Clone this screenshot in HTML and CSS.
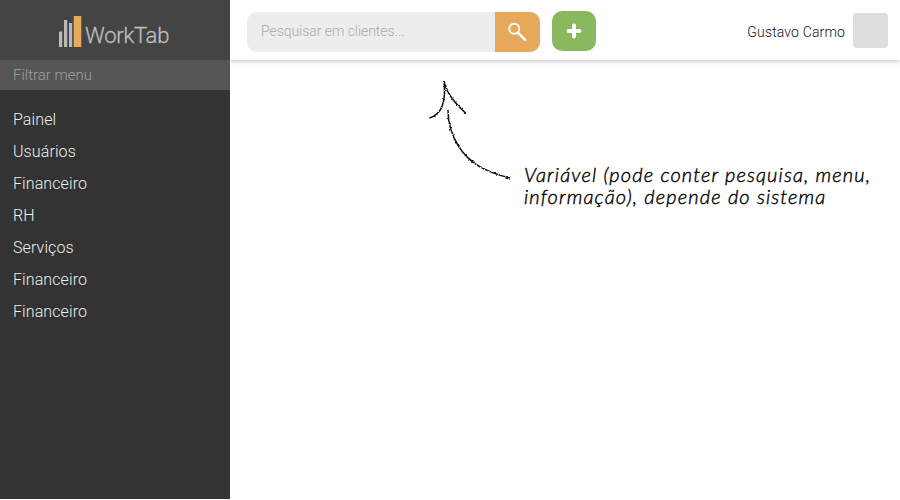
FILE: index.html
```html
<!DOCTYPE html>
<html lang="pt-BR">
<head>
<meta charset="utf-8">
<title>WorkTab</title>
<link rel="stylesheet" href="styles.css">
</head>
<body>
<div class="app">
  <aside class="sidebar">
    <div class="brand">
      <svg class="brand-mark" width="24" height="32" viewBox="0 0 24 32" aria-hidden="true">
        <path fill="#b9b9b9" d="M0 15.500h3.200V31H0zM5 4h3.200v27H5zM10 7h3.200v24H10z"/>
        <path fill="#e7a95c" d="M14.700 0h7.600v31h-7.600z"/>
      </svg>
      <span class="brand-name">WorkTab</span>
    </div>
    <div class="filter">Filtrar menu</div>
    <nav class="menu">
      <a>Painel</a>
      <a>Usuários</a>
      <a>Financeiro</a>
      <a>RH</a>
      <a>Serviços</a>
      <a>Financeiro</a>
      <a>Financeiro</a>
    </nav>
  </aside>
  <div class="main">
    <header class="topbar">
      <div class="search">
        <span class="search-text">Pesquisar em clientes...</span>
        <span class="search-button">
          <svg width="45" height="40" viewBox="0 0 45 40" fill="none" stroke="#fff" stroke-linecap="round" aria-hidden="true">
            <circle cx="19.2" cy="16.7" r="5" stroke-width="1.9"/>
            <path d="M23.2 20.8l7 7" stroke-width="2.5"/>
          </svg>
        </span>
      </div>
      <span class="add">
        <svg width="44" height="40" viewBox="0 0 44 40" stroke="#fff" stroke-width="4" stroke-linecap="round" aria-hidden="true">
          <path d="M22 14.6v10.8M16.6 20h10.8"/>
        </svg>
      </span>
      <span class="user">Gustavo Carmo</span>
      <span class="avatar"></span>
    </header>
    <section class="content">
      <svg class="arrow" width="100" height="110" viewBox="420 75 100 110" fill="none" stroke="#111" stroke-width="1.5" aria-hidden="true">
        <filter id="rough" x="-10%" y="-10%" width="120%" height="120%">
          <feTurbulence type="fractalNoise" baseFrequency=".55" numOctaves="2" seed="4"/>
          <feDisplacementMap in="SourceGraphic" scale="2.6" xChannelSelector="R" yChannelSelector="G"/>
        </filter>
        <g filter="url(#rough)">
          <path d="M510 178C486 172 470 164 459 147C452 136 448 123 448 110"/>
          <path d="M444 81C446 99 443 114 429.5 118"/>
          <path d="M444 81C447 95 457 105 466 113.500"/>
        </g>
      </svg>
      <p class="note"><span class="note-first">Variável (pode conter pesquisa, menu,</span><br><span class="note-second">informação), depende do sistema</span></p>
    </section>
  </div>
</div>
</body>
</html>
```
FILE: styles.css
```css
* { box-sizing: border-box; }
body {
  margin: 0;
  background: #fff;
  font-family: Roboto, "Liberation Sans", sans-serif;
  font-weight: 300;
}
.app { display: flex; height: 499px; }
.sidebar { width: 230px; flex: none; background: #333; }
.brand {
  height: 60px;
  padding: 16px 0 0 59px;
  display: flex;
  background: #444;
}
.brand-name {
  margin: 6px 0 0 2px;
  font-size: 22px;
  line-height: 28px;
  font-weight: 300;
  letter-spacing: -.25px;
  color: #bebebe;
  -webkit-text-stroke: .3px #bebebe;
}
.filter {
  height: 30px;
  padding-left: 13px;
  line-height: 30px;
  font-size: 15px;
  color: #a0a0a0;
  background: #555;
}
.menu { padding: 14px 13px 0; }
.menu a {
  display: block;
  height: 32px;
  line-height: 32px;
  font-size: 16px;
  letter-spacing: .1px;
  color: #eee;
}
.main { flex: 1; }
.topbar {
  height: 60px;
  padding: 0 12px 0 17px;
  display: flex;
  align-items: flex-start;
  box-shadow: 0 2px 4px rgba(0, 0, 0, .18);
  clip-path: inset(0 0 -10px 0);
}
.search {
  display: flex;
  width: 293px;
  height: 40px;
  margin-top: 12px;
  border-radius: 10px;
  overflow: hidden;
  background: #ededed;
}
.search-text {
  flex: 1;
  padding-left: 14px;
  line-height: 39px;
  font-size: 14px;
  letter-spacing: -.05px;
  color: #aaa;
}
.search-button { width: 45px; height: 40px; background: #e6a85b; }
.add {
  width: 44px;
  height: 40px;
  margin: 11px 0 0 12px;
  border-radius: 10px;
  background: #8ab85e;
}
.user {
  margin-left: auto;
  line-height: 64px;
  font-size: 14px;
  letter-spacing: .15px;
  color: #111;
}
.avatar {
  width: 35px;
  height: 35px;
  margin: 13px 0 0 8px;
  border-radius: 4px;
  background: #ddd;
}
.content { display: flex; padding: 15px 0 0 190px; }
.arrow { flex: none; }
.note {
  margin: 88px 0 0 4px;
  white-space: nowrap;
  font-family: Lato, "Open Sans", sans-serif;
  font-style: italic;
  font-weight: 300;
  font-size: 20px;
  line-height: 22px;
  color: #000;
  -webkit-text-stroke: .4px #000;
}
.note-first { letter-spacing: 1.14px; }
.note-second { letter-spacing: 1.14px; }
```
